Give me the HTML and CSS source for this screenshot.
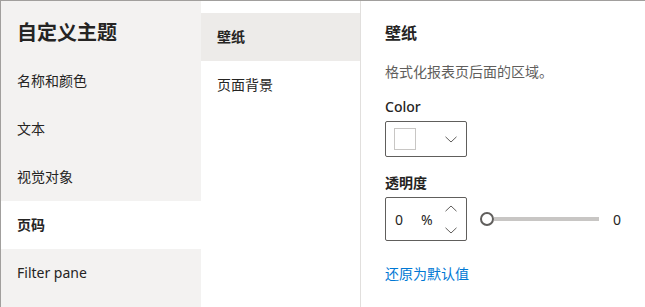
FILE: index.html
```html
<!DOCTYPE html>
<html lang="zh-CN">
<head>
    <meta charset="UTF-8">
    <meta name="viewport" content="width=device-width, initial-scale=1.0">
    <title>自定义主题</title>
    <link rel="stylesheet" href="styles.css">
</head>
<body>
    <div class="theme-dialog">
        <!-- Left navigation -->
        <nav class="sidebar">
            <h1 class="sidebar-title">自定义主题</h1>
            <div class="nav-item">名称和颜色</div>
            <div class="nav-item">文本</div>
            <div class="nav-item">视觉对象</div>
            <div class="nav-item active">页码</div>
            <div class="nav-item">Filter pane</div>
        </nav>

        <!-- Sub tabs -->
        <div class="subnav">
            <div class="subnav-item active">壁纸</div>
            <div class="subnav-item">页面背景</div>
        </div>

        <!-- Settings -->
        <section class="settings">
            <h2 class="settings-title">壁纸</h2>
            <p class="settings-desc">格式化报表页后面的区域。</p>

            <label class="field-label">Color</label>
            <div class="color-picker">
                <span class="swatch"></span>
                <svg class="chevron" width="12" height="7" viewBox="0 0 12 7">
                    <path d="M0.5 0.8 L6 6 L11.5 0.8" fill="none" stroke="#605e5c" stroke-width="1"/>
                </svg>
            </div>

            <label class="field-label label-bold">透明度</label>
            <div class="opacity-row">
                <div class="spinner">
                    <span class="spin-value">0</span>
                    <span class="spin-unit">%</span>
                    <span class="spin-arrows">
                        <svg width="12" height="7" viewBox="0 0 12 7">
                            <path d="M0.5 6.2 L6 1 L11.5 6.2" fill="none" stroke="#605e5c" stroke-width="1"/>
                        </svg>
                        <svg width="12" height="7" viewBox="0 0 12 7">
                            <path d="M0.5 0.8 L6 6 L11.5 0.8" fill="none" stroke="#605e5c" stroke-width="1"/>
                        </svg>
                    </span>
                </div>
                <div class="slider">
                    <span class="thumb"></span>
                    <span class="track"></span>
                </div>
                <span class="slider-value">0</span>
            </div>

            <a class="reset-link" href="#">还原为默认值</a>
        </section>
    </div>
</body>
</html>
```

FILE: styles.css
```css
/* Page */
body {
    margin: 0;
    font-family: 'Noto Sans', 'Noto Sans CJK SC', sans-serif;
    color: #252423;
    background: #fff;
}

.theme-dialog {
    display: flex;
    height: 306px;
    border-top: 1px solid #a19f9d;
    border-left: 1px solid #a19f9d;
    overflow: hidden;
}

/* Left navigation */
.sidebar {
    width: 200px;
    flex-shrink: 0;
    background: #f3f2f1;
}

.sidebar-title {
    margin: 0;
    padding: 8px 0 0 16px;
    height: 48px;
    line-height: 48px;
    font-size: 20px;
    font-weight: 700;
    color: #252423;
}

.nav-item {
    height: 48px;
    line-height: 48px;
    padding-left: 16px;
    font-size: 14px;
}

.nav-item.active {
    background: #fff;
    font-weight: 600;
}

/* Sub tabs */
.subnav {
    width: 159px;
    flex-shrink: 0;
    padding-top: 12px;
    border-right: 1px solid #e1dfdd;
}

.subnav-item {
    height: 48px;
    line-height: 48px;
    padding-left: 16px;
    font-size: 14px;
}

.subnav-item.active {
    background: #edebe9;
    font-weight: 600;
}

/* Settings panel */
.settings {
    flex: 1;
    padding: 20px 24px 0;
}

.settings-title {
    margin: 0;
    font-size: 16px;
    line-height: 24px;
    font-weight: 700;
}

.settings-desc {
    margin: 17px 0 0;
    font-size: 14px;
    line-height: 20px;
    color: #605e5c;
}

.field-label {
    display: block;
    margin-top: 15px;
    font-size: 14px;
    line-height: 20px;
    font-weight: 500;
}

.label-bold {
    margin-top: 16px;
    font-weight: 600;
}

.color-picker {
    box-sizing: border-box;
    width: 82px;
    height: 36px;
    margin-top: 4px;
    padding: 0 9px 0 8px;
    border: 1px solid #605e5c;
    border-radius: 2px;
    display: flex;
    align-items: center;
    justify-content: space-between;
}

.swatch {
    width: 20px;
    height: 20px;
    border: 1px solid #c8c6c4;
    background: #fff;
}

.opacity-row {
    display: flex;
    align-items: center;
    margin-top: 4px;
}

.spinner {
    box-sizing: border-box;
    width: 82px;
    height: 44px;
    border: 1px solid #605e5c;
    border-radius: 2px;
    display: flex;
    align-items: center;
    padding: 0 9px;
    font-size: 14px;
}

.spin-value {
    width: 26px;
}

.spin-unit {
    flex: 1;
}

.spin-arrows {
    display: flex;
    flex-direction: column;
    gap: 15px;
}

.spin-arrows svg {
    display: block;
}

.slider {
    display: flex;
    align-items: center;
    margin-left: 13px;
}

.thumb {
    box-sizing: border-box;
    width: 14px;
    height: 14px;
    border: 2px solid #605e5c;
    border-radius: 50%;
    background: #fff;
}

.track {
    width: 105px;
    height: 4px;
    background: #c8c6c4;
}

.slider-value {
    margin-left: 14px;
    font-size: 14px;
}

.reset-link {
    display: block;
    margin-top: 23px;
    font-size: 14px;
    line-height: 20px;
    color: #0078d4;
    text-decoration: none;
}
```
